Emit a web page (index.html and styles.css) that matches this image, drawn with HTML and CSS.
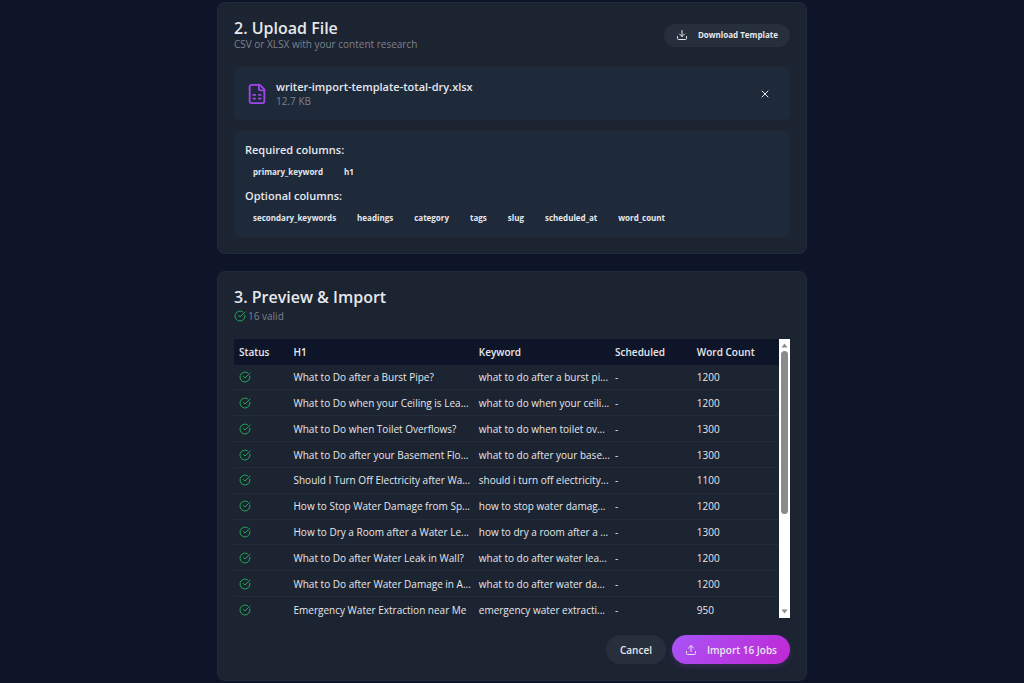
FILE: index.html
```html
<!DOCTYPE html>
<html lang="en">
<head>
    <meta charset="UTF-8">
    <meta name="viewport" content="width=device-width, initial-scale=1.0">
    <title>Import Jobs</title>
    <link rel="stylesheet" href="styles.css">
</head>
<body>
    <!-- Shared icons -->
    <svg class="icon-defs" aria-hidden="true">
        <symbol id="check" viewBox="0 0 24 24">
            <path d="M21.8 10A10 10 0 1 1 17 3.34"/>
            <path d="m9 11 3 3L22 4"/>
        </symbol>
    </svg>

    <main class="page">
        <!-- Upload -->
        <section class="card">
            <header class="card-header">
                <div>
                    <h2>2. Upload File</h2>
                    <p class="subtitle">CSV or XLSX with your content research</p>
                </div>
                <button type="button" class="btn btn-small">
                    <svg class="icon" viewBox="0 0 24 24"><path d="M12 3v12"/><path d="m7 10 5 5 5-5"/><path d="M3 15v4a2 2 0 0 0 2 2h14a2 2 0 0 0 2-2v-4"/></svg>
                    Download Template
                </button>
            </header>

            <div class="panel file">
                <svg class="icon file-icon" viewBox="0 0 24 24"><path d="M15 2H6a2 2 0 0 0-2 2v16a2 2 0 0 0 2 2h12a2 2 0 0 0 2-2V7Z"/><path d="M14 2v4a2 2 0 0 0 2 2h4"/><path d="M8 13h2"/><path d="M14 13h2"/><path d="M8 17h2"/><path d="M14 17h2"/></svg>
                <div class="file-info">
                    <p class="file-name">writer-import-template-total-dry.xlsx</p>
                    <p class="file-size">12.7 KB</p>
                </div>
                <button type="button" class="remove" aria-label="Remove file">
                    <svg class="icon" viewBox="0 0 24 24"><path d="M18 6 6 18"/><path d="m6 6 12 12"/></svg>
                </button>
            </div>

            <div class="panel columns">
                <h3>Required columns:</h3>
                <ul class="tags">
                    <li class="plain">primary_keyword</li>
                    <li class="plain">h1</li>
                </ul>
                <h3>Optional columns:</h3>
                <ul class="tags">
                    <li>secondary_keywords</li>
                    <li>headings</li>
                    <li>category</li>
                    <li>tags</li>
                    <li>slug</li>
                    <li>scheduled_at</li>
                    <li>word_count</li>
                </ul>
            </div>
        </section>

        <!-- Preview -->
        <section class="card">
            <h2>3. Preview &amp; Import</h2>
            <p class="valid"><svg class="icon check"><use href="#check"/></svg>16 valid</p>

            <div class="table-scroll">
                <div class="table-view">
                <table>
                    <thead>
                        <tr>
                            <th class="col-status">Status</th>
                            <th class="col-title">H1</th>
                            <th class="col-keyword">Keyword</th>
                            <th class="col-date">Scheduled</th>
                            <th>Word Count</th>
                        </tr>
                    </thead>
                    <tbody>
                        <tr><td><svg class="icon check"><use href="#check"/></svg></td><td>What to Do after a Burst Pipe?</td><td>what to do after a burst pi...</td><td>-</td><td>1200</td></tr>
                        <tr><td><svg class="icon check"><use href="#check"/></svg></td><td>What to Do when your Ceiling is Lea...</td><td>what to do when your ceili...</td><td>-</td><td>1200</td></tr>
                        <tr><td><svg class="icon check"><use href="#check"/></svg></td><td>What to Do when Toilet Overflows?</td><td>what to do when toilet ov...</td><td>-</td><td>1300</td></tr>
                        <tr><td><svg class="icon check"><use href="#check"/></svg></td><td>What to Do after your Basement Flo...</td><td>what to do after your base...</td><td>-</td><td>1300</td></tr>
                        <tr><td><svg class="icon check"><use href="#check"/></svg></td><td>Should I Turn Off Electricity after Wa...</td><td>should i turn off electricity...</td><td>-</td><td>1100</td></tr>
                        <tr><td><svg class="icon check"><use href="#check"/></svg></td><td>How to Stop Water Damage from Sp...</td><td>how to stop water damag...</td><td>-</td><td>1200</td></tr>
                        <tr><td><svg class="icon check"><use href="#check"/></svg></td><td>How to Dry a Room after a Water Le...</td><td>how to dry a room after a ...</td><td>-</td><td>1300</td></tr>
                        <tr><td><svg class="icon check"><use href="#check"/></svg></td><td>What to Do after Water Leak in Wall?</td><td>what to do after water lea...</td><td>-</td><td>1200</td></tr>
                        <tr><td><svg class="icon check"><use href="#check"/></svg></td><td>What to Do after Water Damage in A...</td><td>what to do after water da...</td><td>-</td><td>1200</td></tr>
                        <tr><td><svg class="icon check"><use href="#check"/></svg></td><td>Emergency Water Extraction near Me</td><td>emergency water extracti...</td><td>-</td><td>950</td></tr>
                    </tbody>
                </table>
                </div>
                <div class="scrollbar" aria-hidden="true">
                    <svg viewBox="0 0 11 11"><path d="M5.5 4 8.5 8h-6z"/></svg>
                    <div class="track"><div class="thumb"></div></div>
                    <svg viewBox="0 0 11 11"><path d="M5.5 7 8.5 3h-6z"/></svg>
                </div>
            </div>

            <footer class="actions">
                <button type="button" class="btn">Cancel</button>
                <button type="button" class="btn btn-primary">
                    <svg class="icon" viewBox="0 0 24 24"><path d="M12 15V3"/><path d="m7 8 5-5 5 5"/><path d="M3 15v4a2 2 0 0 0 2 2h14a2 2 0 0 0 2-2v-4"/></svg>
                    Import 16 Jobs
                </button>
            </footer>
        </section>
    </main>
</body>
</html>
```
FILE: styles.css
```css
/* Reset */
* {
    margin: 0;
    padding: 0;
    box-sizing: border-box;
}

body {
    background: #0f1528;
    color: #e6e8ec;
    font-family: "Open Sans", sans-serif;
    font-size: 10px;
    line-height: 14px;
}

button {
    font: inherit;
    color: inherit;
    border: none;
    cursor: pointer;
}

.icon-defs {
    display: none;
}

.icon {
    width: 12px;
    height: 12px;
    flex: none;
    fill: none;
    stroke: currentColor;
    stroke-width: 2;
    stroke-linecap: round;
    stroke-linejoin: round;
}

/* Cards */
.page {
    max-width: 590px;
    margin: 0 auto;
    padding: 2px 0;
    display: flex;
    flex-direction: column;
    gap: 17px;
}

.card {
    padding: 16px;
    background: #1c2331;
    border: 1px solid #1f2a3b;
    border-radius: 8px;
}

.card-header {
    display: flex;
    align-items: center;
    justify-content: space-between;
    margin-bottom: 16px;
}

h2 {
    font-size: 16px;
    line-height: 18px;
    font-weight: 600;
}

h3 {
    font-size: 11px;
    line-height: 16px;
    font-weight: 600;
}

.subtitle,
.valid,
.file-size {
    color: #7d828d;
}

/* Buttons */
.btn {
    display: flex;
    align-items: center;
    gap: 10px;
    height: 29px;
    padding: 0 14px;
    border-radius: 15px;
    background: #272e3c;
    font-size: 10px;
    font-weight: 600;
}

.btn-small {
    height: 23px;
    padding: 0 12px;
    font-size: 8px;
    font-weight: 700;
}

.btn-primary {
    padding: 0 13px;
    background: linear-gradient(135deg, #a855f7, #c026d3);
    box-shadow: 0 2px 6px #a855f733;
}

/* File and column panels */
.panel {
    background: #1e293a;
    border-radius: 6px;
}

.file {
    display: flex;
    align-items: center;
    gap: 8px;
    padding: 12px;
    margin-bottom: 11px;
}

.file-icon {
    width: 22px;
    height: 22px;
    color: #9f46ec;
}

.file-info {
    flex: 1;
}

.file-name {
    font-size: 11px;
    line-height: 15px;
    font-weight: 600;
}

.remove {
    display: flex;
    padding: 7px;
    background: none;
}

.columns {
    padding: 11px;
}

.tags {
    display: flex;
    flex-wrap: wrap;
    gap: 5px;
    margin: 6px 0 8px;
    list-style: none;
}

.tags:last-child {
    margin-bottom: 0;
}

.tags li {
    padding: 0 7px;
    border: 1px solid #222c3d;
    border-radius: 8px;
    font-size: 8px;
    font-weight: 700;
}

.tags .plain {
    border-color: transparent;
}

/* Preview table */
.valid {
    display: flex;
    align-items: center;
    gap: 2px;
    margin: 3px 0 16px;
}

.check {
    display: block;
    color: #1fa855;
}

.table-scroll {
    display: flex;
    height: 279px;
    overflow: hidden;
}

.table-view {
    flex: 1;
}

table {
    width: 100%;
    height: 284px;
    table-layout: fixed;
    border-collapse: collapse;
}

th,
td {
    padding: 0 5px;
    text-align: left;
    white-space: nowrap;
    font-weight: 500;
}

th {
    height: 26px;
    background: #0f1528;
    font-weight: 600;
}

td {
    border-bottom: 1px solid #242b39;
}

.col-status {
    width: 10%;
}

.col-title {
    width: 34%;
}

.col-keyword {
    width: 25%;
}

.col-date {
    width: 15%;
}

.scrollbar {
    display: flex;
    flex-direction: column;
    width: 11px;
    background: #fff;
    fill: #8b8b8b;
}

.scrollbar svg {
    height: 12px;
}

.track {
    flex: 1;
    padding: 0 2px;
}

.thumb {
    height: 64%;
    border-radius: 4px;
    background: #8b8b8b;
}

.actions {
    display: flex;
    justify-content: flex-end;
    gap: 6px;
    margin-top: 17px;
}
```
